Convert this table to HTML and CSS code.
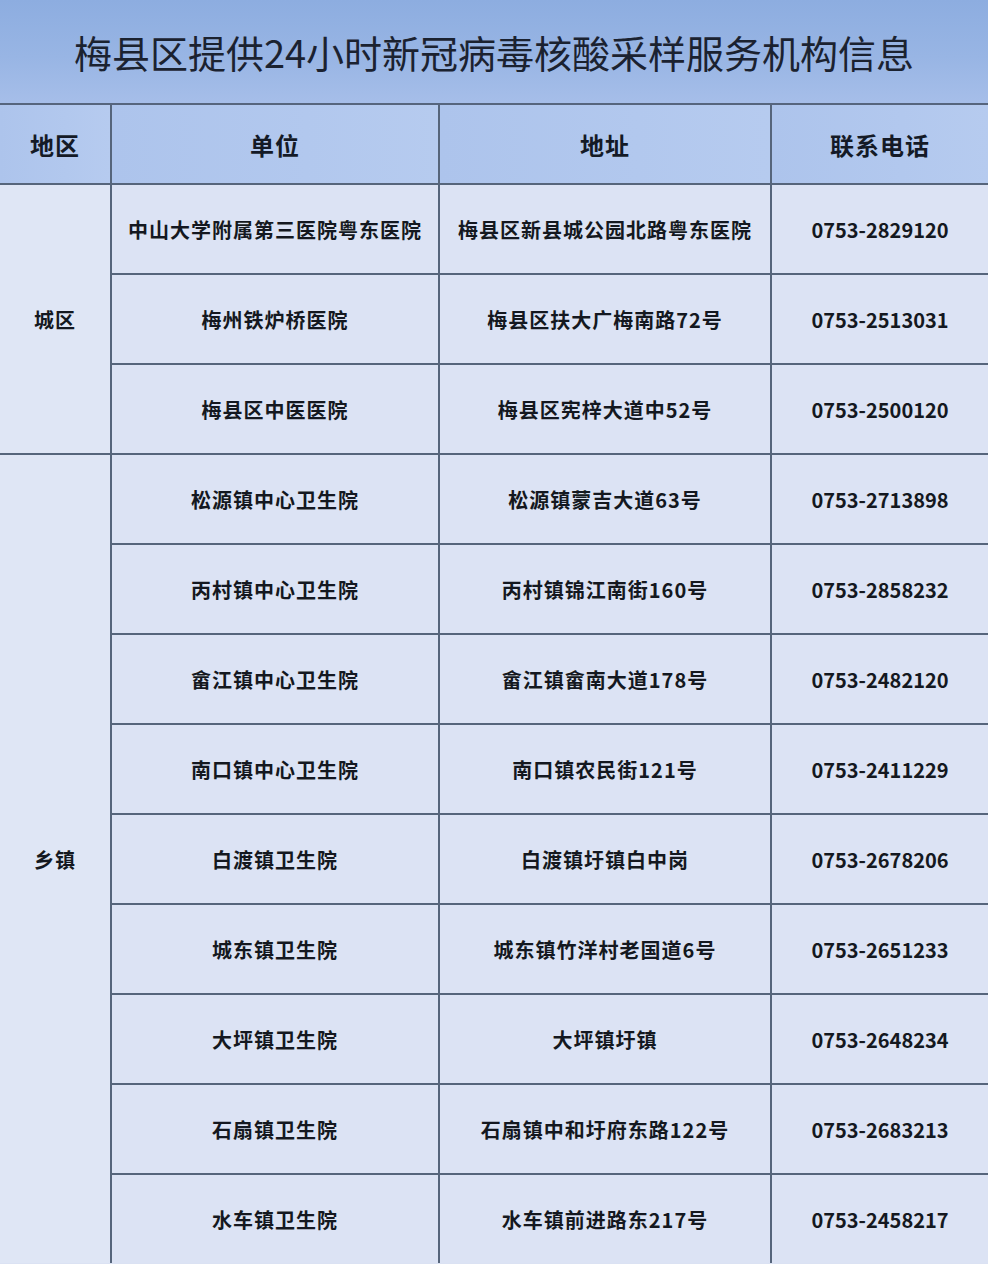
FILE: index.html
```html
<!DOCTYPE html>
<html lang="zh-CN">
<head>
<meta charset="utf-8">
<title>梅县区提供24小时新冠病毒核酸采样服务机构信息</title>
<link rel="stylesheet" href="styles.css">
</head>
<body>
<div class="page">
  <h1 class="title">梅县区提供24小时新冠病毒核酸采样服务机构信息</h1>
  <div class="grid">
    <div class="cell head">地区</div>
    <div class="cell head">单位</div>
    <div class="cell head">地址</div>
    <div class="cell head">联系电话</div>

    <div class="cell region region-city">城区</div>
    <div class="cell">中山大学附属第三医院粤东医院</div>
    <div class="cell">梅县区新县城公园北路粤东医院</div>
    <div class="cell phone">0753-2829120</div>

    <div class="cell">梅州铁炉桥医院</div>
    <div class="cell">梅县区扶大广梅南路72号</div>
    <div class="cell phone">0753-2513031</div>

    <div class="cell">梅县区中医医院</div>
    <div class="cell">梅县区宪梓大道中52号</div>
    <div class="cell phone">0753-2500120</div>

    <div class="cell region region-town">乡镇</div>
    <div class="cell">松源镇中心卫生院</div>
    <div class="cell">松源镇蒙吉大道63号</div>
    <div class="cell phone">0753-2713898</div>

    <div class="cell">丙村镇中心卫生院</div>
    <div class="cell">丙村镇锦江南街160号</div>
    <div class="cell phone">0753-2858232</div>

    <div class="cell">畲江镇中心卫生院</div>
    <div class="cell">畲江镇畲南大道178号</div>
    <div class="cell phone">0753-2482120</div>

    <div class="cell">南口镇中心卫生院</div>
    <div class="cell">南口镇农民街121号</div>
    <div class="cell phone">0753-2411229</div>

    <div class="cell">白渡镇卫生院</div>
    <div class="cell">白渡镇圩镇白中岗</div>
    <div class="cell phone">0753-2678206</div>

    <div class="cell">城东镇卫生院</div>
    <div class="cell">城东镇竹洋村老国道6号</div>
    <div class="cell phone">0753-2651233</div>

    <div class="cell">大坪镇卫生院</div>
    <div class="cell">大坪镇圩镇</div>
    <div class="cell phone">0753-2648234</div>

    <div class="cell">石扇镇卫生院</div>
    <div class="cell">石扇镇中和圩府东路122号</div>
    <div class="cell phone">0753-2683213</div>

    <div class="cell">水车镇卫生院</div>
    <div class="cell">水车镇前进路东217号</div>
    <div class="cell phone">0753-2458217</div>
  </div>
</div>
</body>
</html>
```
FILE: styles.css
```css
html, body {
  margin: 0;
  padding: 0;
  background: #dbe2f3;
}
.page {
  width: 988px;
  height: 1264px;
  overflow: hidden;
  font-family: "Noto Sans CJK SC", "Noto Sans", sans-serif;
  color: #121722;
}
.title {
  margin: 0;
  height: 103px;
  display: flex;
  align-items: center;
  justify-content: center;
  font-size: 38px;
  font-weight: 400;
  letter-spacing: 0;
  color: #1b2230;
  background: linear-gradient(180deg, #8dade0 0%, #98b5e4 55%, #a6bee9 100%);
  border-bottom: 2px solid #56657d;
}
.grid {
  display: grid;
  grid-template-columns: 110px 326px 330px 216px;
  grid-template-rows: 78px repeat(12, 88px);
  gap: 2px;
  background: #56657b;
}
.cell {
  display: flex;
  align-items: center;
  justify-content: center;
  background: #dce3f4;
  font-size: 20px;
  font-weight: 700;
  letter-spacing: 1px;
  color: #141820;
  white-space: nowrap;
}
.head {
  background: linear-gradient(90deg, #adc4ec 0%, #b2c8ee 60%, #b6cbef 100%);
  font-size: 24px;
  letter-spacing: 1px;
  color: #141a26;
}
.phone {
  letter-spacing: 0;
}
.region {
  background: #dfe6f5;
  grid-column: 1;
}
.region-city {
  grid-row: 2 / span 3;
}
.region-town {
  grid-row: 5 / span 9;
}
```
